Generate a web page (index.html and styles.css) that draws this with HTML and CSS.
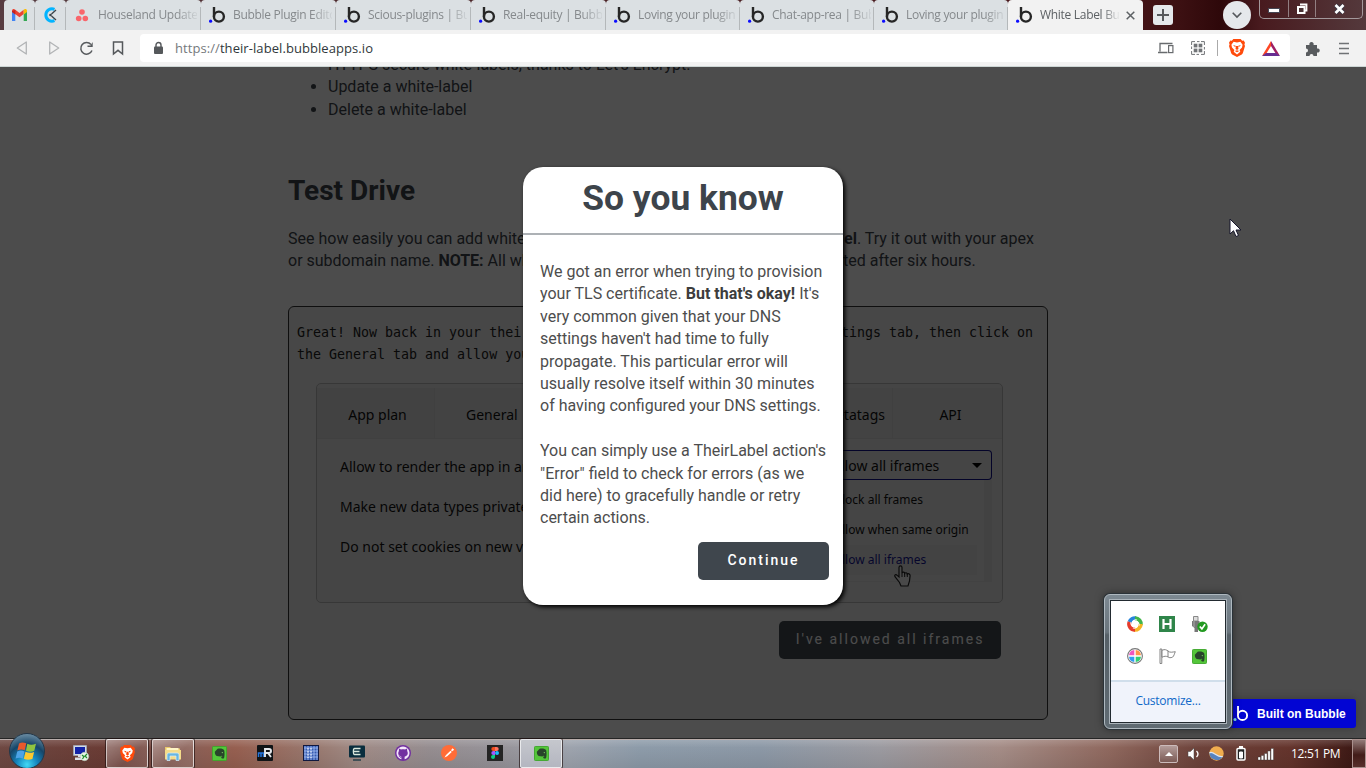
FILE: index.html
```html
<!DOCTYPE html>
<html lang="en">
<head>
<meta charset="utf-8">
<title>White Label</title>
<link rel="stylesheet" href="styles.css">
</head>
<body>
<svg class="defs" width="0" height="0">
  <defs>
    <symbol id="bubble" viewBox="0 0 17 16"><circle cx="1.6" cy="14.2" r="1.6" fill="#0c0cff"/><path d="M5 0V9.6" stroke="#262626" stroke-width="2.4" fill="none"/><circle cx="9.9" cy="9.6" r="5" fill="none" stroke="#262626" stroke-width="2.4"/></symbol>
    <symbol id="brave" viewBox="0 0 16 18"><path d="M4.4 0h7.2l1.6 1.7 1.5-.2 1.3 2.3-.6 1.7.6 1.6-2.2 7.2-1 1.3L8 18l-4.800-2.400-1-1.300L0 7.100l.6-1.600L0 3.800l1.300-2.300 1.500.2z" fill="#ff4a0b"/><path d="M4.600 2.800l3.400.7 3.400-.7 2.200 3-.6 2.600-2.400 2.500.7 1.800L8 15.500l-3.300-2.800.7-1.800L3 8.400l-.6-2.600z" fill="#fff"/><path d="M4 6l2.700.7-.4 1.600zM12 6l-2.700.7.4 1.600zM7 7h2l.5 3L8 11l-1.500-1zM5.800 12L8 11.300l2.200.7L8 13.200z" fill="#ff4a0b"/></symbol>
    <symbol id="evernote" viewBox="0 0 16 16"><rect x=".5" y=".5" width="15" height="15" rx="1" fill="#54c63a" stroke="#3ea52c"/><path d="M3 6l3-3c3-.7 6 0 7 1.500.6 3 .5 6-.2 8.500-1 .8-3 .5-3-1 0-1 1-1.400 1.700-1.100-.7-1-2-.6-2.500.4L5 10.700C3.500 9.500 3 8 3 6z" fill="#29442b"/><circle cx="11" cy="7" r=".7" fill="#7dd066"/></symbol>
  </defs>
</svg>
<div class="screen">
  <header class="tabs">
    <div class="tab pinned"><svg width="15" height="12" viewBox="0 0 15 12"><path d="M0 1.500V12h3.300V5z" fill="#4285f4"/><path d="M15 1.500V12h-3.300V5z" fill="#34a853"/><path d="M0 2c0-2 2-2.500 3.300-1.300L7.500 4l4.200-3.300v4.200L7.500 8.200 0 2.800z" fill="#ea4335"/><path d="M11.700.7C13-.5 15 0 15 2v1l-3.300 2.500z" fill="#fbbc04"/><path d="M0 2v1l3.300 2.500V1z" fill="#c5221f"/></svg></div>
    <div class="tab pinned"><svg width="15" height="16" viewBox="0 0 15 16"><path d="M11.500 2.300A6.200 6.200 0 1 0 11.500 13.700" fill="none" stroke="#03b4ff" stroke-width="3"/><path d="M8.500 7l4.500-4M8.500 9l4.500 4" stroke="#3b454b" stroke-width="1.400"/><circle cx="7.500" cy="8" r="1.300" fill="#3b454b"/></svg></div>
    <div class="tab"><svg class="fav" width="17" height="13" viewBox="0 0 17 13"><g fill="#f9656b"><circle cx="8" cy="3" r="2.800"/><circle cx="4.700" cy="9.500" r="2.800"/><circle cx="11.300" cy="9.500" r="2.800"/></g></svg><span class="label">Houseland Update</span></div>
    <div class="tab"><svg class="fav" width="17" height="16"><use href="#bubble"/></svg><span class="label">Bubble Plugin Edito</span></div>
    <div class="tab"><svg class="fav" width="17" height="16"><use href="#bubble"/></svg><span class="label">Scious-plugins | Bu</span></div>
    <div class="tab"><svg class="fav" width="17" height="16"><use href="#bubble"/></svg><span class="label">Real-equity | Bubbl</span></div>
    <div class="tab narrow"><svg class="fav" width="17" height="16"><use href="#bubble"/></svg><span class="label">Loving your plugin</span></div>
    <div class="tab narrow"><svg class="fav" width="17" height="16"><use href="#bubble"/></svg><span class="label">Chat-app-rea | Bub</span></div>
    <div class="tab narrow"><svg class="fav" width="17" height="16"><use href="#bubble"/></svg><span class="label">Loving your plugin</span></div>
    <div class="tab active"><svg class="fav" width="17" height="16"><use href="#bubble"/></svg><span class="label">White Label Bu</span><svg class="close" width="9" height="9" viewBox="0 0 9 9"><path d="M.7.700l7.600 7.600M8.300.7L.7 8.300" stroke="#5d6164" stroke-width="1.500"/></svg></div>
    <div class="newtab"><svg width="12" height="12" viewBox="0 0 12 12"><path d="M6 0v12M0 6h12" stroke="#55585b" stroke-width="2"/></svg></div>
    <div class="chevron"><svg width="10" height="6" viewBox="0 0 10 6"><path d="M.7.700L5 5 9.300.7" fill="none" stroke="#55585b" stroke-width="1.600"/></svg></div>
    <div class="winbtns">
      <div class="wb min"><svg width="12" height="5"><rect x=".5" y=".5" width="11" height="4" fill="#fff" stroke="#454552"/></svg></div>
      <div class="wb"><svg width="12" height="12" viewBox="0 0 12 12"><path d="M4 1.500h6.500v6H9" fill="none" stroke="#fff" stroke-width="1.800"/><rect x="2" y="4" width="6.500" height="6" fill="#4c3437" stroke="#fff" stroke-width="2"/></svg></div>
      <div class="wb wide"><svg width="11" height="10" viewBox="0 0 11 10"><path d="M1.500 1l8 8M9.500 1l-8 8" stroke="#3a3a48" stroke-width="4"/><path d="M1.500 1l8 8M9.500 1l-8 8" stroke="#fff" stroke-width="2.600"/></svg></div>
    </div>
  </header>
  <div class="toolbar">
    <svg class="nav" width="12" height="14" viewBox="0 0 12 14"><path d="M10.300 1v12L1.300 7z" fill="none" stroke="#b2b4b6" stroke-width="1.300" stroke-linejoin="round"/></svg>
    <svg class="nav" width="12" height="14" viewBox="0 0 12 14"><path d="M1.700 1v12l9-6z" fill="none" stroke="#b2b4b6" stroke-width="1.300" stroke-linejoin="round"/></svg>
    <svg class="nav reload" width="15" height="15" viewBox="0 0 15 15"><path d="M12 3.500A5.800 5.800 0 1 0 13 9.500" fill="none" stroke="#585b5e" stroke-width="1.500"/><path d="M13.700 1v5H8.500V4.500h3z" fill="#585b5e"/></svg>
    <svg class="nav mark" width="12" height="14" viewBox="0 0 12 14"><path d="M1.500.900h9V13L6 9.300 1.500 13z" fill="none" stroke="#55585b" stroke-width="1.500"/></svg>
    <div class="address">
      <svg width="9" height="12" viewBox="0 0 9 12"><path d="M2 5V3a2.500 2.500 0 0 1 5 0v2" fill="none" stroke="#55585b" stroke-width="1.400"/><rect y="4.500" width="9" height="7.500" rx="1" fill="#55585b"/></svg>
      <span class="url"><span class="scheme">https://</span>their-label.bubbleapps.io</span>
      <svg class="cast" width="16" height="12" viewBox="0 0 16 12"><path d="M14.500 1.500H2v8M0 10.500h9.500" fill="none" stroke="#686b6e" stroke-width="1.300"/><rect x="10.600" y="3.600" width="4.300" height="7" fill="#fff" stroke="#686b6e" stroke-width="1.200"/></svg>
      <svg class="qr" width="14" height="14" viewBox="0 0 14 14"><path d="M.6 4V.6H4M6 .6h2.500M10 .6h3.400V4M13.400 6v2.500M13.400 10v3.400H10M8 13.400H5.500M4 13.400H.6V10M.6 8V5.500" fill="none" stroke="#707376"/><g fill="#707376"><rect x="2.700" y="2.700" width="3.700" height="3.700"/><rect x="7.600" y="2.700" width="3.700" height="3.700"/><rect x="2.700" y="7.600" width="3.700" height="3.700"/><rect x="7.600" y="7.600" width="3.700" height="3.700"/></g></svg>
      <i class="sep"></i>
      <svg class="lion" width="16" height="18"><use href="#brave"/></svg>
      <svg class="bat" width="18" height="15" viewBox="0 0 18 15"><path d="M9 0L0 15l4-2 5-8z" fill="#ff4724"/><path d="M9 0l9 15-4-2-5-8z" fill="#9e1f63"/><path d="M0 15l4-3h10l4 3z" fill="#662d91"/></svg>
    </div>
    <svg class="ext" width="15" height="15" viewBox="0 0 15 15"><path d="M1 4h3.500a2.200 2.200 0 1 1 4 0H12v3.500a2.100 2.100 0 1 1 0 4V15H8.500a2 2 0 1 0-4 0H1v-3.500a2 2 0 1 0 0-4z" fill="#585b5e"/></svg>
    <svg width="10" height="13" viewBox="0 0 10 13"><path d="M0 1.500h10M0 6.500h10M0 11.500h10" stroke="#6f7275" stroke-width="1.400"/></svg>
  </div>

  <main class="viewport">
    <div class="page">
      <ul class="features"><li>HTTPS secure white-labels, thanks to Let's Encrypt.</li><li>Update a white-label</li><li>Delete a white-label</li></ul>
      <h2>Test Drive</h2>
      <div class="intro">
        <div class="split"><span>See how easily you can add white-</span><span class="nudge"><b>el</b>. Try it out with your apex</span></div>
        <div class="split"><span>or subdomain name. <b>NOTE:</b> All whi</span><span>ted after six hours.</span></div>
      </div>
      <section class="demo">
        <div class="mono">
          <div class="split"><span>Great! Now back in your their</span><span>tings tab, then click on</span></div>
          <div class="split"><span>the General tab and allow you</span></div>
        </div>
        <div class="card">
          <div class="cardtabs"><span class="ct plan">App plan</span><span class="ct gen">General</span><span class="ct meta">etatags</span><span class="ct api">API</span></div>
          <div class="cardbody">
            <div class="opts"><p>Allow to render the app in an</p><p>Make new data types private</p><p>Do not set cookies on new vi</p></div>
            <div class="drop">
              <div class="select"><span>llow all iframes</span><i class="caret"></i></div>
              <div class="menu"><p>lock all frames</p><p>llow when same origin</p><p class="chosen">llow all iframes</p></div>
              <svg class="hand" width="18" height="22" viewBox="0 0 18 22"><path d="M5 12V2.500C5 .3 8 .3 8 2.500V8c.5-1.300 2.700-1 2.700.3.700-1 2.600-.5 2.600.8.800-.8 2.800-.2 2.800 1.500L15.500 16 14 21H7L5.500 17.500 1 11.700C0 9.500 2 9 3.200 10.400z" fill="#f5f5f5" stroke="#222" stroke-width="1.200"/><path d="M8 8v4M10.700 8.500V12M13.300 9V12" stroke="#222"/></svg>
            </div>
          </div>
        </div>
        <button class="btn allowed">I've allowed all iframes</button>
      </section>
    </div>
    <div class="shade"></div>
    <div class="modal">
      <h1>So you know</h1>
      <div class="msg">
        <p>We got an error when trying to provision<br>your TLS certificate. <b>But that's okay!</b> It's<br>very common given that your DNS<br>settings haven't had time to fully<br>propagate. This particular error will<br>usually resolve itself within 30 minutes<br>of having configured your DNS settings.</p>
        <p>You can simply use a TheirLabel action's<br>"Error" field to check for errors (as we<br>did here) to gracefully handle or retry<br>certain actions.</p>
      </div>
      <button class="btn continue">Continue</button>
    </div>
    <div class="badge"><svg width="16" height="17" viewBox="0 0 16 17"><circle cx="2" cy="14.500" r="1.500" fill="#7ddbe8"/><path d="M5 1v9" stroke="#fff" stroke-width="1.900"/><circle cx="9.500" cy="10.400" r="4.600" fill="none" stroke="#fff" stroke-width="1.900"/></svg><span>Built on Bubble</span></div>
  </main>

  <footer class="taskbar">
    <div class="start"><svg width="26" height="26" viewBox="0 0 26 26"><path d="M5 5.500c2.500-1.600 5-1.200 7.300-.2l-1.600 7c-2.400-1-4.700-1-7.300.3z" fill="#e8592c"/><path d="M13.300 5.700c2.500 1.300 5 1.500 8.700.1l-1.700 7c-3 1.300-5.700 1-8.300-.1z" fill="#8fc440"/><path d="M3.200 13.600c2.500-1.400 5-1.200 7.300-.2l-1.700 7c-2.300-1-4.600-1-7.200.2z" fill="#4da3e6"/><path d="M11.500 13.800c2.700 1.300 5.300 1.400 8.600.1l-1.700 7c-3.300 1.200-6 1-8.600-.2z" fill="#fdc92e"/></svg></div>
    <div class="task"><svg width="16" height="16" viewBox="0 0 16 16"><rect x=".7" y=".7" width="12.600" height="9.600" fill="#dfe6ef" stroke="#a7b0bd"/><rect x="2" y="2" width="10" height="7" fill="#1424a8"/><path d="M5 10h5v2H5zM2 12.500h9V15H2z" fill="#dce1e6"/><circle cx="11.500" cy="11.500" r="4.200" fill="#e9f4e7" stroke="#b8c9b8" stroke-width=".6"/><path d="M9 10l2 1.700L9.500 14M14 9l-2 2 2 2" fill="none" stroke="#208c2c" stroke-width="1.200"/></svg></div>
    <div class="task on"><svg width="15" height="17" viewBox="0 0 16 18"><use href="#brave"/></svg></div>
    <div class="task on"><svg width="18" height="16" viewBox="0 0 18 16"><path d="M1 2h5l1.500 1.500H16V13H1z" fill="#e9c86a"/><path d="M2.500 3h12v9h-12z" fill="#fff5c5"/><path d="M1 5h16v9.500H1z" fill="#f4dc8a"/><path d="M3 15.500V10c0-1.500 1-2 2-2h8c1.500 0 2 .8 2 2v5.500h-3V11H6v4.500z" fill="#69b6e0" stroke="#d9effa" stroke-width=".7"/></svg></div>
    <div class="task"><svg width="15" height="15"><use href="#evernote"/></svg></div>
    <div class="task"><svg width="16" height="16" viewBox="0 0 16 16"><rect width="16" height="16" rx="1" fill="#101316"/><path d="M1.500 12V8h5v4M4 8v4" fill="none" stroke="#2476df" stroke-width="1.500"/><path d="M8 12V4h4c2.700 0 2.700 4 0 4H8m3 0l3 4" fill="none" stroke="#e5e9ed" stroke-width="1.900"/></svg></div>
    <div class="task"><svg width="16" height="16" viewBox="0 0 16 16"><rect width="16" height="16" fill="#10183f"/><rect x="1" y="1" width="14" height="14" fill="#3458ad"/><path d="M2 1v14M5 1v14M8 1v14M11 1v14M14 1v14M1 3h14M1 6h14M1 9h14M1 12h14" stroke="#9db8ef" stroke-width=".9"/><path d="M5 3v10M8 3v10" stroke="#fff" stroke-dasharray="1.500 1.500"/></svg></div>
    <div class="task"><svg width="16" height="16" viewBox="0 0 16 16"><rect y=".5" width="16" height="12" rx="1" fill="#092d3d"/><path d="M11.500 3.500h-6c-1.500 0-1.500 6 0 6h6M5 6.500h5.500" fill="none" stroke="#d8e6dc" stroke-width="1.300"/><path d="M4 15h8" stroke="#092d3d" stroke-width="1.200"/></svg></div>
    <div class="task"><svg width="16" height="16" viewBox="0 0 16 16"><circle cx="8" cy="8" r="8" fill="#7230a0"/><path d="M6.400 14.300v-2.500c-3-.7-3.900-3.200-2.500-5.700L4 3.500l2 1c1.400-.4 2.700-.4 4 0l2-1 .2 2.600c1.300 2.500.4 5-2.600 5.700v2.500a6.500 6.500 0 1 0-3.200 0z" fill="#f4e6fa" fill-rule="evenodd"/><path d="M3.800 11c1.200.2 1 1.600 2.600 1.400" fill="none" stroke="#7230a0"/></svg></div>
    <div class="task"><svg width="16" height="16" viewBox="0 0 16 16"><circle cx="8" cy="8" r="8" fill="#ff6c37"/><path d="M3.500 12.500l1.500-2.600 4.500-4.200 1.300 1.200-4.600 4.300zM10 5.200l1.500-2 1.700 1.600-2 1.500z" fill="#fff"/></svg></div>
    <div class="task"><svg width="16" height="16" viewBox="0 0 16 16"><rect width="16" height="16" fill="#242424"/><path d="M8 2H6.300a2 2 0 0 0 0 4H8z" fill="#f24e1e"/><path d="M8 2h1.700a2 2 0 0 1 0 4H8z" fill="#ff7262"/><path d="M8 6H6.300a2 2 0 0 0 0 4H8z" fill="#a259ff"/><circle cx="10" cy="8" r="2" fill="#1abcfe"/><path d="M8 10H6.300A2 2 0 1 0 8 12z" fill="#0acf83"/></svg></div>
    <div class="task on lit"><svg width="15" height="15"><use href="#evernote"/></svg></div>
    <div class="tray">
      <div class="up"><svg width="8" height="4"><path d="M0 4l4-4 4 4z" fill="#fff"/></svg></div>
      <svg class="t1" width="12" height="14" viewBox="0 0 12 14"><path d="M0 4.500h2.500L6 1v12L2.500 9.500H0z" fill="#fff" stroke="#444" stroke-width=".5"/><path d="M8.500 4q3 3 0 6" fill="none" stroke="#fff" stroke-width="1.300"/></svg>
      <svg class="t2" width="15" height="15" viewBox="0 0 15 15"><circle cx="7.500" cy="7.500" r="7.200" fill="#f0ad4f"/><path d="M.4 7C4 4 8 12 13.800 10.500A7.200 7.200 0 0 1 .4 7z" fill="#5683bf"/><path d="M.4 7C4 4 8 12 13.800 10.500" stroke="#dce7f4" stroke-width="1.200" fill="none"/></svg>
      <svg class="t3" width="10" height="15" viewBox="0 0 10 15"><rect x="1" y="2.500" width="8" height="11.500" rx="1" fill="#222" stroke="#fff" stroke-width="1.500"/><path d="M3 1h4" stroke="#fff" stroke-width="2"/><path d="M3.500 6h3v6h-3z" fill="#fff" stroke="#fff"/></svg>
      <svg class="t4" width="16" height="12" viewBox="0 0 16 12"><g fill="#fff" stroke="#333" stroke-width=".4"><path d="M0 9h2.500v3H0zM3.200 7.500h2.500V12H3.200zM6.500 5.500H9V12H6.500zM9.800 3h2.500v9H9.800zM13 .5h2.500V12H13z"/></g></svg>
      <span class="clock">12:51 PM</span>
      <div class="peek"></div>
    </div>
  </footer>

  <div class="traypop">
    <div class="popin">
      <div class="grid">
        <svg width="16" height="16" viewBox="0 0 16 16"><g fill="none" stroke-width="4"><path d="M2.500 6A5.800 5.800 0 0 1 9 2.300" stroke="#2684dc"/><path d="M8 2.200A5.800 5.800 0 0 1 13.800 9" stroke="#42b54a"/><path d="M13.800 8A5.800 5.800 0 0 1 7 13.700" stroke="#f5b524"/><path d="M8 13.800A5.800 5.800 0 0 1 2.500 6" stroke="#e63a2a"/></g><path d="M4.500 6.500q2-4 6-3Q7 4 6.500 7M9.500 4.500q4 2 3 6Q12 7 9 6.500M11.500 9.500q-2 4-6 3Q9 12 9.500 9M6.500 11.500q-4-2-3-6Q4 9 7 9.500" fill="#fff"/></svg>
        <svg width="16" height="16" viewBox="0 0 16 16"><rect width="16" height="16" fill="#2f854a"/><path d="M4.500 3v10M11.500 3v10M4.500 8h7" stroke="#fff" stroke-width="2.200"/></svg>
        <svg width="17" height="16" viewBox="0 0 17 16"><path d="M2.500.5H7V5H2.500z" fill="#ddd" stroke="#888"/><path d="M1 5h7.500v5L7 12v4H3.500v-4L1 10z" fill="#777"/><path d="M3 5v6" stroke="#aaa"/><circle cx="11.500" cy="10.700" r="5.200" fill="#239a21"/><path d="M8.800 10.500l2.100 2.400 3.200-4.600" fill="none" stroke="#fff" stroke-width="1.700"/></svg>
        <svg width="16" height="16" viewBox="0 0 16 16"><circle cx="8" cy="8" r="7.400" fill="#fff" stroke="#777" stroke-width="1.100"/><path d="M7.300 7.300V2a6 6 0 0 0-5.300 5.300z" fill="#ef55bf"/><path d="M8.700 7.300V2A6 6 0 0 1 14 7.300z" fill="#ff9347"/><path d="M7.300 8.700V14A6 6 0 0 1 2 8.700z" fill="#319cf2"/><path d="M8.700 8.700V14A6 6 0 0 0 14 8.700z" fill="#2ecf72"/></svg>
        <svg width="17" height="16" viewBox="0 0 17 16"><path d="M1 1h1.800v14.500H1z" fill="#fff" stroke="#777" stroke-width=".9"/><path d="M3 2.300c3-1.500 4.500-.2 6 .6v6C7 8 5.500 8 3 9.200zM9 3c2 2 4.500 1 7.300.7-1 2-1 4-2.800 5.500-2 .8-3.500.6-4.500-.3" fill="#fff" stroke="#777" stroke-width=".9"/></svg>
        <svg width="15" height="15"><use href="#evernote"/></svg>
      </div>
      <div class="custom">Customize...</div>
    </div>
  </div>
  <svg class="pointer" width="13" height="20" viewBox="0 0 13 20"><path d="M1 1v15l3.500-3.300L7 18.500l2.500-1L7 12h5z" fill="#fff" stroke="#15152a" stroke-width="1"/></svg>
</div>
</body>
</html>
```
FILE: styles.css
```css
* { box-sizing: border-box; }
body, h1, h2, p, ul { margin: 0; padding: 0; }
body { width: 1366px; height: 768px; overflow: hidden; font-family: Roboto, sans-serif; }
svg { display: block; flex: none; overflow: visible; }
.defs { position: absolute; }
.screen { position: relative; width: 1366px; height: 768px; display: flex; flex-direction: column; overflow: hidden; }

.tabs { height: 30px; flex: none; display: flex; padding-left: 4px; background: linear-gradient(90deg, #573d42 0, #4d2b2e 300px, #471418 1120px, #3c1012 1180px, #2e080a 1220px, #481a1e 1260px, #54393c 1366px); }
.tab { width: 135px; height: 30px; flex: none; display: flex; align-items: center; background: #dbe0e3; font: 12px "Open Sans", sans-serif; letter-spacing: -.3px; color: #85898c; padding-left: 8px; border-radius: 4px 4px 0 0; position: relative; }
.tab::after { content: ""; position: absolute; right: 0; top: 7px; bottom: 0; width: 1px; background: #b4b8ba; }
.tab.narrow { width: 134px; }
.tab.pinned { width: 31px; justify-content: center; padding-left: 0; }
.tab.active { width: 135px; background: #f2f2f2; color: #5d6164; }
.tab.active::after { display: none; }
.fav { margin-right: 7px; }
.label { width: 99px; overflow: hidden; white-space: nowrap; line-height: 20px; -webkit-mask-image: linear-gradient(90deg, #000 78px, transparent 102px); mask-image: linear-gradient(90deg, #000 78px, transparent 102px); }
.active .label { width: 80px; margin-right: 6px; -webkit-mask-image: linear-gradient(90deg, #000 62px, transparent 80px); mask-image: linear-gradient(90deg, #000 62px, transparent 80px); }
.newtab { margin: 5px 0 0 10px; width: 20px; height: 20px; border-radius: 3px; background: #e5e8eb; display: grid; place-items: center; }
.chevron { margin: 1px 0 0 50px; width: 28px; height: 28px; border-radius: 50%; background: #e5e8eb; display: grid; place-items: center; }
.winbtns { margin-left: 8px; width: 104px; height: 19px; display: flex; border: 1px solid #a3989b; border-top: 0; border-radius: 0 0 5px 5px; }
.wb { width: 29px; height: 17px; display: grid; place-items: center; border-right: 1px solid #927f82; }
.wb.min { padding-top: 3px; }
.wb:nth-child(2) { width: 27px; }
.wb.wide { width: 46px; border-right: 0; }

.toolbar { height: 37px; flex: none; display: flex; align-items: center; background: #f2f2f2; border-bottom: 1px solid #cdd6d5; padding-left: 16px; }
.nav { margin-right: 20px; }
.reload { margin: 0 18px 0 -1px; }
.mark { margin-right: 16px; }
.address { width: 1150px; flex: none; height: 28px; border-radius: 4px; background: #fff; display: flex; align-items: center; padding-left: 14px; }
.url { margin-left: 12px; width: 982px; flex: none; font: 13px "Open Sans", sans-serif; letter-spacing: .07px; color: #30373b; }
.scheme { color: #75797c; }
.cast { margin-left: 1px; }
.qr { margin-left: 17px; }
.sep { margin-left: 12px; width: 1px; height: 16px; background: #aaa; }
.lion { margin-left: 11px; }
.bat { margin-left: 17px; }
.ext { margin: 0 19px 0 15px; }

.viewport { position: relative; height: 671px; flex: none; overflow: hidden; background: #fff; }
.page { width: 760px; margin-left: 288px; padding-top: 1px; font-size: 16px; line-height: 22.400px; color: #3d444b; }
.features { margin-top: -14px; padding-left: 40px; }
h2 { margin-top: 52px; font-size: 28px; line-height: 36px; font-weight: 700; }
.intro { margin-top: 18.600px; }
.split { display: grid; grid-template-columns: 235px 1fr; column-gap: 320px; white-space: nowrap; }
.nudge { padding-left: 1px; }
.demo { margin-top: 33.400px; height: 414px; border: 1px solid #333; border-radius: 6px; background: #eee; }
.mono { font: 13.300px/22.400px "DejaVu Sans Mono", monospace; color: #222; padding: 15px 0 0 8px; }
.mono .split { grid-template-columns: 226px 1fr; column-gap: 318px; }
.card { width: 687px; height: 220px; margin: 16px 0 0 27px; border: 1px solid #b9b9b9; border-radius: 5px; background: #e8e8e8; font: 14px/20px "Noto Sans", sans-serif; color: #111; padding-top: 4px; }
.cardtabs { display: grid; grid-template-columns: 118px 88px 370px 109px; height: 51px; line-height: 54px; background: #e2e2e2; border-bottom: 1px solid #d5d5d5; }
.plan { text-align: center; padding-left: 4px; background: #dcdcdc; border-right: 1px solid #d5d5d5; }
.gen { padding-left: 31px; }
.ct { white-space: nowrap; height: 50px; }
.meta { text-align: right; padding-right: 7px; border-right: 1px solid #d5d5d5; }
.api { text-align: center; padding-left: 6px; }
.cardbody { display: grid; grid-template-columns: 206px 149px; column-gap: 320px; }
.opts { padding: 8px 0 0 23px; white-space: nowrap; }
.opts p { height: 40px; line-height: 40px; }
.drop { position: relative; padding-top: 11px; }
.select { height: 30px; border: 1.500px solid #10108a; border-left: 0; border-radius: 0 4px 4px 0; display: flex; align-items: center; justify-content: space-between; padding-right: 9px; line-height: 30px; padding-top: 2px; }
.select span { margin-left: -2px; }
.caret { border: 5px solid transparent; border-top-color: #000; border-bottom: 0; }
.menu { width: 149px; height: 102px; font-size: 12px; line-height: 30px; padding-top: 5px; border-right: 8px solid #dedede; border-bottom: 1px solid #dedede; white-space: nowrap; text-indent: -1px; }
.menu .chosen { color: #171795; background: #e2e2e2; width: 134px; }
.hand { position: absolute; left: 51px; top: 126px; }
.btn { font: 500 14px Roboto, sans-serif; letter-spacing: 2px; color: #fff; background: #3f464d; border: 0; border-radius: 5px; height: 38px; padding: 0 0 2px; display: block; }
.allowed { width: 222px; margin: 18px 0 0 490px; background: #444b52; font-weight: 400; }
.shade { position: absolute; inset: 0; background: rgba(0,0,0,.7); }
.modal { position: absolute; left: 523px; top: 100px; width: 320px; height: 438px; border-radius: 20px; background: #fff; box-shadow: 2px 2px 4px #000; color: #3d3d3d; }
h1 { height: 68px; border-bottom: 2px solid #adb1b5; text-align: center; font-size: 35.400px; line-height: 63px; font-weight: 700; color: #3d444b; }
.msg { padding: 26px 0 0 17px; font-size: 16px; line-height: 22.400px; white-space: nowrap; font-weight: 400; color: #4d4d4d; }
.msg b { color: #3d3d3d; }
.msg p + p { margin-top: 22.400px; }
.continue { margin: 12px 0 0 175px; width: 131px; }
.badge { position: absolute; left: 1228px; top: 632px; width: 128px; height: 29px; border-radius: 3px; background: #0205d3; display: flex; align-items: center; padding-left: 5px; font: bold 12px "Liberation Sans", sans-serif; color: #fff; box-shadow: 0 0 10px rgba(0,0,0,.25); white-space: nowrap; }
.badge span { margin-left: 8px; }

.taskbar { height: 30px; flex: none; display: flex; background: linear-gradient(rgba(255,255,255,.18), rgba(255,255,255,0) 30%, rgba(0,0,0,.08)), linear-gradient(90deg, #6e4842 0, #6a3b34 110px, #8a5f56 190px, #965f50 235px, #98776d 310px, #a08b86 360px, #958d90 430px, #969399 500px, #9da3ad 570px, #8d9ba9 640px, #8c98a6 760px, #9b9aa0 880px, #a48c86 1000px, #8f685e 1110px, #6d423a 1200px, #64342c 1290px, #351310 1366px); border-top: 1px solid #252525; box-shadow: inset 0 1px #b9adab; position: relative; }
.start { width: 36px; height: 36px; margin: -6px 13px 0 9px; border-radius: 50%; background: radial-gradient(circle at 50% 90%, #43d9f5 0, #1585bd 30%, #164568 58%, #8da9ba 100%); border: 1px solid #23384a; display: grid; place-items: center; flex: none; }
.task { width: 42px; height: 29px; margin-right: 4px; flex: none; display: grid; place-items: center; padding-bottom: 1px; }
.task.on { background: linear-gradient(135deg, rgba(255,255,255,.38), rgba(255,255,255,.1) 60%); border: 1px solid rgba(255,255,255,.65); border-radius: 2px; box-shadow: 0 0 0 1px rgba(30,15,15,.65); }
.task.lit { background: linear-gradient(#c5c7cd, #b4b6c0); }
.start + .task { margin-left: 2px; }
.tray { margin-left: auto; display: flex; align-items: center; color: #fff; height: 29px; }
.up { width: 19px; height: 18px; border: 1px solid #cbb; border-radius: 2px; background: linear-gradient(#b39c99, #7c5b56); display: grid; place-items: center; margin-right: 10px; }
.t1 { margin-right: 9px; }
.t2 { margin-right: 12px; }
.t3 { margin-right: 12px; }
.t4 { margin-right: 17px; }
.clock { width: 61px; font: 12px "Open Sans", sans-serif; letter-spacing: -.3px; white-space: nowrap; }
.peek { width: 14px; height: 29px; border: 1px solid #aa918e; background: linear-gradient(#927a78, #421c18 55%, #58302c); }

.traypop { position: absolute; left: 1104px; top: 594px; width: 128px; height: 135px; border: 1px solid #aeb8bf; border-radius: 6px; background: linear-gradient(#7d8992, #69747c 28%, #566067 30%, #606b73); box-shadow: 0 0 0 1px #2a3238, 0 0 8px rgba(0,0,0,.5); padding: 5px; }
.popin { width: 116px; height: 123px; border: 1px solid #222a30; outline: 1px solid #aab3ba; background: #fff; display: flex; flex-direction: column; }
.grid { height: 79px; display: grid; grid-template-columns: repeat(3, 32px); grid-auto-rows: 32px; place-items: center; padding: 7px 0 0 8px; }
.custom { height: 42px; border-top: 2px solid #d0deeb; background: #f0f3fb; color: #0f68c8; display: grid; place-items: center; padding-bottom: 3px; font: 12px "Open Sans", sans-serif; letter-spacing: -.25px; }
.pointer { position: absolute; left: 1229px; top: 218px; }
```
